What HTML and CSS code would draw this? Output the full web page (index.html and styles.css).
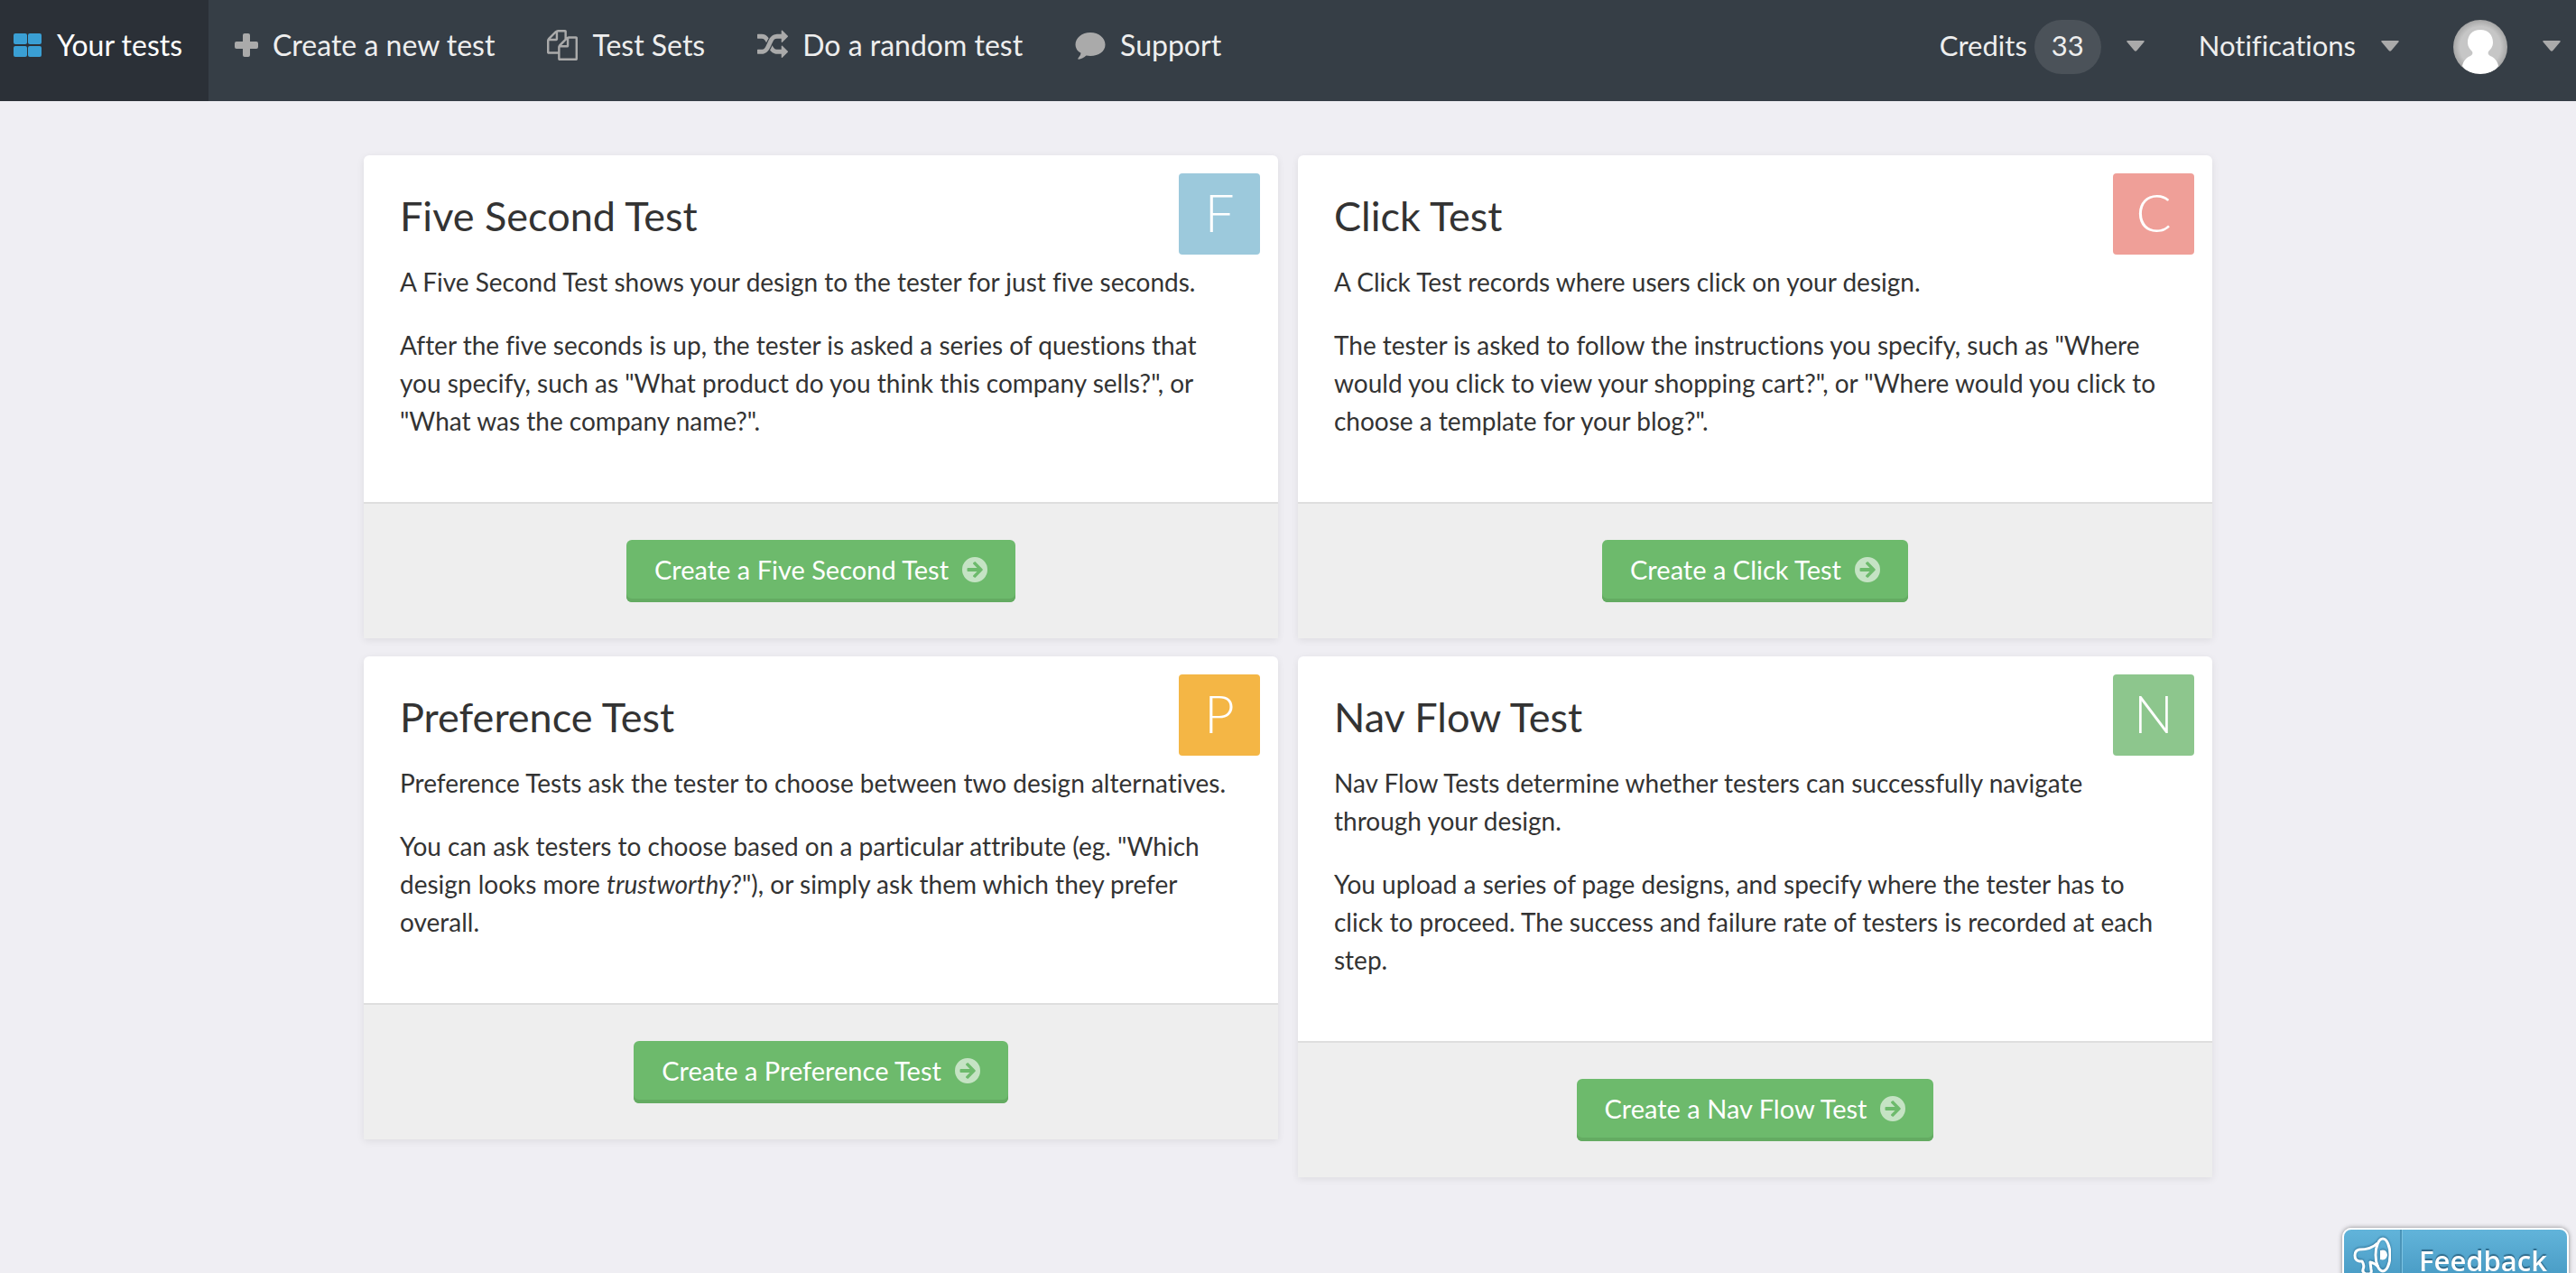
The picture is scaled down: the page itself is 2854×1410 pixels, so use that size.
FILE: index.html
```html
<!DOCTYPE html>
<html lang="en">
<head>
<meta charset="utf-8">
<meta name="viewport" content="width=device-width, initial-scale=1">
<title>Your tests</title>
<link rel="stylesheet" href="styles.css">
</head>
<body>
<svg class="sprite" aria-hidden="true">
  <symbol id="caret" viewBox="0 0 20 12"><path d="M1.500 0h17q2 0 .9 1.500l-8 9.500q-1.400 1.500-2.800 0l-8-9.500Q-.5 0 1.500 0z"/></symbol>
  <symbol id="arrow" viewBox="0 0 28 28"><path fill-rule="evenodd" d="M14 0a14 14 0 1 1 0 28a14 14 0 1 1 0-28zM12.300 7.700L16.500 12H6.500Q5.500 12 5.500 13v2Q5.500 16 6.500 16H16.500L12.300 20.300Q11.700 21 12.300 21.700L13.500 22.600Q14.200 23.200 14.900 22.500L22.500 14.800Q23.200 14 22.500 13.200L14.900 5.500Q14.200 4.800 13.500 5.400L12.300 6.300Q11.700 7 12.300 7.700z"/></symbol>
</svg>
<header class="topbar">
  <nav class="menu">
    <a class="item active" href="#tests">
      <svg class="icon" viewBox="0 0 32 32"><rect x="0" y="3" width="15" height="12" rx="2"/><rect x="16" y="3" width="15" height="12" rx="2"/><rect x="0" y="17" width="15" height="12" rx="2"/><rect x="16" y="17" width="15" height="12" rx="2"/></svg>
      <span>Your tests</span>
    </a>
    <a class="item" href="#new">
      <svg class="icon plus" viewBox="0 0 26 32"><path d="M11 3h4q2 0 2 2v7h7q2 0 2 2v4q0 2-2 2h-7v7q0 2-2 2h-4q-2 0-2-2v-7H2q-2 0-2-2v-4q0-2 2-2h7V5q0-2 2-2z"/></svg>
      <span>Create a new test</span>
    </a>
    <a class="item" href="#sets">
      <svg class="icon" viewBox="0 0 1792 1792"><path d="M1696 384q40 0 68 28t28 68v1216q0 40-28 68t-68 28h-960q-40 0-68-28t-28-68v-288h-544q-40 0-68-28t-28-68v-672q0-40 20-88t48-76l408-408q28-28 76-48t88-20h416q40 0 68 28t28 68v328q68-40 128-40h416zm-544 213l-299 299h299v-299zm-640-384l-299 299h299v-299zm196 647l316-316v-416h-384v416q0 40-28 68t-68 28h-416v640h512v-256q0-40 20-88t48-76zm956 804v-1152h-384v416q0 40-28 68t-68 28h-416v640h896z"/></svg>
      <span>Test Sets</span>
    </a>
    <a class="item" href="#random">
      <svg class="icon" viewBox="0 0 1792 1792"><path d="M666 481q-60 92-137 273-22-45-37-72.500t-40.500-63.500-51-56.500-63-35-81.500-14.500h-224q-14 0-23-9t-9-23v-192q0-14 9-23t23-9h224q250 0 410 225zm1126 799q0 14-9 23l-320 320q-9 9-23 9-13 0-22.500-9.500t-9.500-22.500v-192q-32 0-85 .5t-81 1-73-1-71-5-64-10.500-63-18.500-58-28.500-59-40-55-53.500-56-69.500q59-93 136-273 22 45 37 72.500t40.500 63.500 51 56.500 63 35 81.500 14.500h256v-192q0-14 9-23t23-9q12 0 24 10l319 319q9 9 9 23zm0-896q0 14-9 23l-320 320q-9 9-23 9-13 0-22.500-9.500t-9.500-22.500v-192h-256q-48 0-87 15t-69 45-51 61.500-45 77.500q-32 62-78 171-29 66-49.500 111t-54 105-64 100-74 83-90 68.500-106.500 42-128 16.500h-224q-14 0-23-9t-9-23v-192q0-14 9-23t23-9h224q48 0 87-15t69-45 51-61.500 45-77.500q32-62 78-171 29-66 49.500-111t54-105 64-100 74-83 90-68.500 106.500-42 128-16.500h256v-192q0-14 9-23t23-9q12 0 24 10l319 319q9 9 9 23z"/></svg>
      <span>Do a random test</span>
    </a>
    <a class="item" href="#support">
      <svg class="icon" viewBox="0 0 34 34"><path d="M17 3C26.500 3 33.500 9.200 33.500 16.500S26.500 29 17 29q-2.500 0-4.500-.4Q8 32.500 4 32.800Q2.600 32.700 3.600 31.300Q6.500 28.500 6.500 25.800Q.5 22.500.5 16.500C.5 9.200 7.500 3 17 3z"/></svg>
      <span>Support</span>
    </a>
  </nav>
  <div class="account">
    <button class="drop" type="button"><span class="credits">Credits <span class="count">33</span></span><svg class="caret"><use href="#caret"/></svg></button>
    <button class="drop" type="button"><span>Notifications</span><svg class="caret"><use href="#caret"/></svg></button>
    <button class="drop user" type="button" aria-label="Account">
      <svg class="avatar" viewBox="0 0 60 60">
        <defs>
          <radialGradient id="shade"><stop offset=".75" stop-color="#c6c6c6"/><stop offset="1" stop-color="#a6a6a6"/></radialGradient>
          <clipPath id="round"><circle cx="30" cy="30" r="30"/></clipPath>
        </defs>
        <circle cx="30" cy="30" r="30" fill="url(#shade)"/>
        <path clip-path="url(#round)" fill="#fff" d="M30 11c9 0 14 6 14 14c0 5-3 8-5 10c-1 2 0 4 2 5c5 2 8 6 9 11c-3 6-11 9-20 9s-17-3-20-9c1-5 4-9 9-11c2-1 3-3 2-5c-2-2-5-5-5-10c0-8 5-14 14-14z"/>
      </svg>
      <svg class="caret"><use href="#caret"/></svg>
    </button>
  </div>
</header>

<main class="cards">
  <section class="card">
    <div class="body">
      <h2>Five Second Test</h2>
      <span class="letter blue" aria-hidden="true">F</span>
      <p>A Five Second Test shows your design to the tester for just five seconds.</p>
      <p>After the five seconds is up, the tester is asked a series of questions that you specify, such as "What product do you think this company sells?", or "What was the company name?".</p>
    </div>
    <div class="foot"><button class="create" type="button">Create a Five Second Test<svg class="go"><use href="#arrow"/></svg></button></div>
  </section>
  <section class="card">
    <div class="body">
      <h2>Click Test</h2>
      <span class="letter red" aria-hidden="true">C</span>
      <p>A Click Test records where users click on your design.</p>
      <p>The tester is asked to follow the instructions you specify, such as "Where would you click to view your shopping cart?", or "Where would you click to choose a template for your blog?".</p>
    </div>
    <div class="foot"><button class="create" type="button">Create a Click Test<svg class="go"><use href="#arrow"/></svg></button></div>
  </section>
  <section class="card">
    <div class="body">
      <h2>Preference Test</h2>
      <span class="letter orange" aria-hidden="true">P</span>
      <p>Preference Tests ask the tester to choose between two design alternatives.</p>
      <p>You can ask testers to choose based on a particular attribute (eg. "Which design looks more <em>trustworthy</em>?"), or simply ask them which they prefer overall.</p>
    </div>
    <div class="foot"><button class="create" type="button">Create a Preference Test<svg class="go"><use href="#arrow"/></svg></button></div>
  </section>
  <section class="card">
    <div class="body">
      <h2>Nav Flow Test</h2>
      <span class="letter green" aria-hidden="true">N</span>
      <p>Nav Flow Tests determine whether testers can successfully navigate through your design.</p>
      <p>You upload a series of page designs, and specify where the tester has to click to proceed. The success and failure rate of testers is recorded at each step.</p>
    </div>
    <div class="foot"><button class="create" type="button">Create a Nav Flow Test<svg class="go"><use href="#arrow"/></svg></button></div>
  </section>
</main>

<button class="feedback" type="button">
  <span class="horn">
    <svg viewBox="0 0 42 44" fill="none" stroke="#fff" stroke-width="3" stroke-linejoin="round">
      <ellipse cx="33" cy="20" rx="8" ry="18"/>
      <path d="M27 7C21 13 14 14 7 14Q2 15 2 20.500Q2 26 7 27l3 0q3 5 1 9q-1 3 3 5l5 0q2-2 1-5l-1-8q5 1 9 5"/>
      <path d="M30 15q7-2 8 5q-1 7-8 5z" fill="#fff" stroke="none"/>
    </svg>
  </span>
  <span class="word">Feedback</span>
</button>
</body>
</html>
```
FILE: styles.css
```css
* { box-sizing: border-box; }

body {
  margin: 0;
  background: #efeef3;
  color: #333;
  font: 28px/42px Lato, "Open Sans", sans-serif;
  font-variant-ligatures: none;
}

button { font: inherit; color: inherit; border: 0; background: none; padding: 0; cursor: pointer; }
.sprite { position: absolute; width: 0; height: 0; }

/* Top bar */
.topbar {
  display: flex;
  justify-content: space-between;
  height: 112px;
  background: #363e46;
  color: #eee;
  font-size: 32px;
  line-height: 56px;
}
.menu, .account { display: flex; }
.item {
  display: flex;
  align-items: center;
  gap: 16px;
  padding: 22px 29px 34px;
  color: inherit;
  text-decoration: none;
  white-space: nowrap;
}
.item.active { padding-left: 15px; background: #2b3037; color: #fff; }
.icon { width: 34px; height: 34px; fill: #aaa; }
.icon.plus { width: 26px; height: 32px; }
.active .icon { width: 32px; height: 32px; fill: #3a9fd4; }

.account { gap: 60px; padding: 22px 17px 30px 30px; font-size: 31px; }
.drop { display: flex; gap: 28px; white-space: nowrap; }
.credits { display: flex; gap: 8px; }
.count {
  height: 60px;
  padding: 0 19px;
  border-radius: 30px;
  background: #4b5259;
}
.caret { width: 20px; height: 12px; margin-top: 23px; fill: #aaa; }
.user { gap: 39px; }
.avatar { width: 60px; height: 60px; }

/* Test type cards */
.cards {
  display: grid;
  grid-template-columns: 1fr 1fr;
  align-items: start;
  gap: 20px 22px;
  max-width: 2048px;
  margin: 60px auto;
}
.card {
  position: relative;
  border-radius: 6px 6px 0 0;
  background: #fff;
  box-shadow: 0 2px 8px rgba(0, 0, 0, .08);
}
.body { padding: 40px 40px 69px; }
h2 { margin: 0 0 24px; font-size: 45px; font-weight: 400; line-height: 55px; }
p { margin: 0; }
p + p { margin-top: 28px; }

.letter {
  position: absolute;
  top: 20px;
  right: 20px;
  width: 90px;
  height: 90px;
  border-radius: 4px;
  color: #fff;
  font-size: 58px;
  font-weight: 300;
  line-height: 86px;
  text-align: center;
}
.blue { background: #9cc9dc; }
.red { background: #ef9f98; }
.orange { background: #f4b645; }
.green { background: #8dc68d; }

.foot {
  display: flex;
  justify-content: center;
  padding: 40px;
  border-top: 2px solid #dedede;
  background: #eee;
}
.create {
  display: flex;
  align-items: center;
  gap: 15px;
  padding: 12px 31px 15px;
  border-radius: 6px;
  background: #6dba6c;
  box-shadow: inset 0 -4px #64ab62;
  color: #fff;
  font-size: 29px;
  line-height: 42px;
}
.go { width: 28px; height: 28px; fill: #c5e3c4; }

/* Feedback tab, partly below the window edge */
.feedback {
  position: fixed;
  right: 8px;
  bottom: -14px;
  display: flex;
  height: 64px;
  border: 2px solid #fff;
  border-radius: 10px;
  background: linear-gradient(#62b4da, #4598c2);
  box-shadow: 0 0 5px rgba(0, 0, 0, .45);
  color: #fff;
  font: 600 31px/60px "Open Sans", "Noto Sans", sans-serif;
  text-shadow: 0 -2px 1px rgba(30, 80, 110, .7);
}
.horn {
  width: 64px;
  padding: 8px 0 0 10px;
  border-right: 2px solid #4a94b8;
}
.horn svg { display: block; width: 42px; height: 44px; filter: drop-shadow(0 -1px 1px #2f7397); }
.word { padding: 4px 22px 0 18px; border-left: 1px solid #7cc3e2; }
```
